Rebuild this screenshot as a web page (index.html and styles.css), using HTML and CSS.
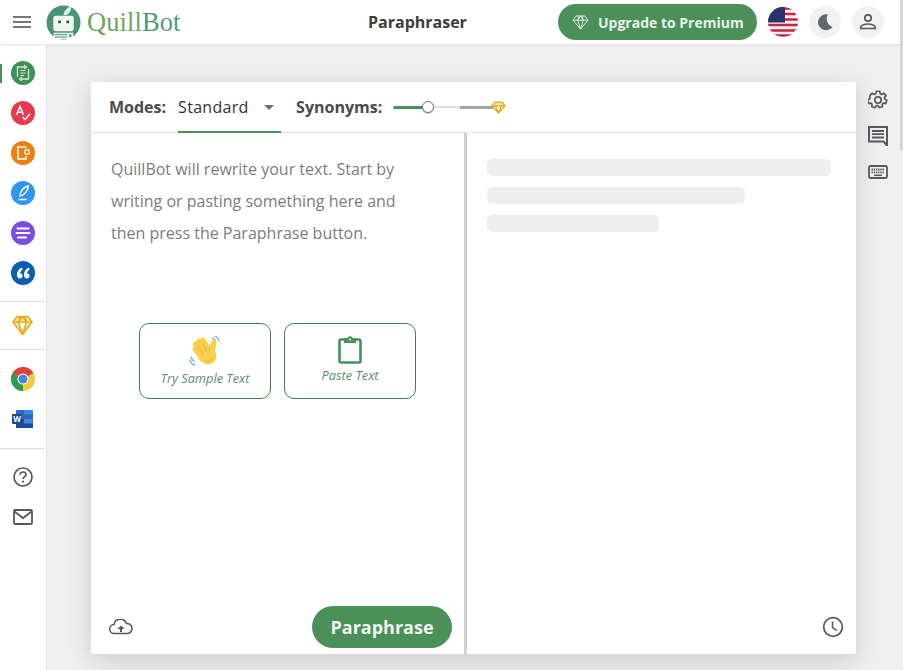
FILE: index.html
```html
<!DOCTYPE html>
<html lang="en">
<head>
<meta charset="utf-8">
<title>QuillBot Paraphraser</title>
<link rel="stylesheet" href="styles.css">
</head>
<body>
<div class="scroll-thumb"></div>
<header class="topbar">
  <div class="brand">
    <svg class="menu-icon" viewBox="0 0 18 12" width="18" height="12"><path d="M0 1h18M0 6h18M0 11h18" stroke="#4a4a4a" stroke-width="1.600"/></svg>
    <svg class="logo" viewBox="0 0 36 36" width="35" height="35">
      <circle cx="18" cy="18" r="17.500" fill="#4a9277"/>
      <path d="M18 10C19 5 22 2.500 25.500 1.500C26.500 5 24 9.500 20 10.500Z" fill="#dfeee7"/>
      <rect x="7.500" y="11" width="21" height="16" rx="2.500" fill="#f2f6f3"/>
      <rect x="12.500" y="16" width="2.800" height="2.800" fill="#2f5a49"/>
      <rect x="21" y="16" width="2.800" height="2.800" fill="#2f5a49"/>
      <path d="M8 28.500h20V35H8z" fill="#f2f6f3"/>
      <path d="M9 30.500h13M9 33h13" stroke="#4a9277"/>
      <circle cx="25" cy="31.500" r="1.400" fill="#4a9277"/>
    </svg>
    <span class="wordmark">Quill<span class="wordmark-dark">Bot</span></span>
  </div>
  <h1 class="page-title">Paraphraser</h1>
  <div class="top-actions">
    <button class="upgrade">
      <svg viewBox="0 0 18 16" width="17" height="15"><path d="M4.500 1h9L17 5.500 9 15 1 5.500zM1 5.500h16M6 5.500 9 15l3-9.500M6 5.500 7.500 1M12 5.500 10.500 1M6 5.500 9 1l3 4.500" fill="none" stroke="#e4f0e6" stroke-width="1"/></svg>
      Upgrade to Premium
    </button>
    <svg class="flag" viewBox="0 0 30 30" width="30" height="30">
      <defs><clipPath id="flag-clip"><circle cx="15" cy="15" r="15"/></clipPath></defs>
      <g clip-path="url(#flag-clip)">
        <rect width="30" height="30" fill="#f4f4f6"/>
        <path d="M0 1.500h30M0 7h30M0 12.500h30M0 18h30M0 23.500h30M0 28.500h30" stroke="#c4243f" stroke-width="2.600"/>
        <rect width="17" height="15.500" fill="#27346f"/>
      </g>
    </svg>
    <span class="round-btn"><svg viewBox="0 0 20 20" width="20" height="20"><path d="M13 2.500A8 8 0 1 0 17.500 15 8.500 8.500 0 0 1 13 2.500Z" fill="#63666a"/></svg></span>
    <span class="round-btn"><svg viewBox="0 0 20 20" width="20" height="20"><circle cx="10" cy="6" r="3.200" fill="none" stroke="#55585c" stroke-width="1.700"/><path d="M2.800 16.500v-1.200c0-2.300 4.500-3.300 7.200-3.300s7.200 1 7.200 3.300v1.200z" fill="none" stroke="#55585c" stroke-width="1.700"/></svg></span>
  </div>
</header>
<div class="body-row">
  <nav class="sidebar">
    <div class="nav-group first">
      <span class="active-mark"></span>
      <svg class="nav-icon" viewBox="0 0 24 24"><circle cx="12" cy="12" r="12" fill="#3f8f57"/><path d="M14.500 6H6.500v10M9.500 18h8V8" fill="none" stroke="#d5e9da" stroke-width="1.300"/><path d="M13 4 15.500 6 13 8M11 16 8.500 18 11 20" fill="none" stroke="#d5e9da" stroke-width="1.100"/><path d="M9.500 9.500h5M9.500 12h5M9.500 14.500h3.500" stroke="#d5e9da" stroke-width="1.200"/></svg>
      <svg class="nav-icon" viewBox="0 0 24 24"><circle cx="12" cy="12" r="12" fill="#e73a4f"/><path d="M5.500 14 9 5.500 12.500 14M6.800 11.300h4.400M11.500 16l2.500 2.500 5-5.500" fill="none" stroke="#fff" stroke-width="1.500"/></svg>
      <svg class="nav-icon" viewBox="0 0 24 24"><circle cx="12" cy="12" r="12" fill="#ee8012"/><path d="M15.500 6H7v12h8v-3" fill="none" stroke="#fff" stroke-width="1.500"/><circle cx="16" cy="11" r="2.300" fill="none" stroke="#fff" stroke-width="1.300"/></svg>
      <svg class="nav-icon" viewBox="0 0 24 24"><circle cx="12" cy="12" r="12" fill="#2e96f0"/><path d="M17.500 5C13 6 9.500 9.500 9 15c4-.5 7.500-4.500 8.500-10ZM7.500 18.500h8" fill="none" stroke="#fff" stroke-width="1.400"/></svg>
      <svg class="nav-icon" viewBox="0 0 24 24"><circle cx="12" cy="12" r="12" fill="#7a4fe0"/><path d="M6.500 7.500h11M5.500 12h13M7 16.500h8" stroke="#fff" stroke-width="2" stroke-linecap="round"/></svg>
      <svg class="nav-icon" viewBox="0 0 24 24"><circle cx="12" cy="12" r="12" fill="#0a5fae"/><path d="M11 6.500C7.500 8 6 10.500 6 14c0 2 1 3.500 2.700 3.500s2.800-1.200 2.800-2.700-1-2.500-2.500-2.500c.2-1.500 1-2.600 2.600-3.600zM18 6.500c-3.500 1.500-5 4-5 7.500 0 2 1 3.500 2.700 3.500s2.800-1.200 2.800-2.700-1-2.500-2.500-2.500c.2-1.500 1-2.600 2.600-3.600z" fill="#fff"/></svg>
    </div>
    <div class="nav-group single">
      <svg class="gem" viewBox="0 0 21 21" width="21" height="21"><path d="M5 1.500h11l4 5.500-9.500 12.500L1 7zM1 7h19M6.500 7l4 12.500 4-12.500M6.500 7 8 1.500M14.500 7 13 1.500M6.500 7l4-5.500 4 5.500" fill="#fbe9a8" stroke="#e3ac22" stroke-width="1.600" stroke-linejoin="round"/></svg>
    </div>
    <div class="nav-group apps">
      <svg class="nav-icon" viewBox="0 0 24 24"><circle cx="12" cy="12" r="12" fill="#f6c93f"/><path d="M12 12 1.600 6A12 12 0 0 1 22.400 6Z" fill="#de4437"/><path d="M12 12 1.600 6A12 12 0 0 0 12 24Z" fill="#2f9b4d"/><circle cx="12" cy="12" r="5.600" fill="#fff"/><circle cx="12" cy="12" r="4.500" fill="#4a83ea"/></svg>
      <svg class="word" viewBox="0 0 21 18" width="21" height="18"><rect x="4" y="0" width="17" height="18" rx="1" fill="#2b66c3"/><rect x="4" y="9" width="17" height="9" rx="1" fill="#1c4a9e"/><path d="M12 0h9v4.500h-9zM12 9h9v4.500h-9z" fill="#3d8ad8"/><rect x="0" y="4" width="10" height="10" rx="1" fill="#174a8f"/><text x="5" y="11.500" class="word-letter">W</text></svg>
    </div>
    <div class="nav-group help">
      <svg viewBox="0 0 20 20" width="20" height="20"><circle cx="10" cy="10" r="9" fill="none" stroke="#55585c" stroke-width="1.700"/><path d="M7 7.700C7 6 8.400 5 10 5s3 1 3 2.600c0 2.200-3 2.200-3 4.400" fill="none" stroke="#55585c" stroke-width="1.700"/><circle cx="10" cy="14.700" r="1.100" fill="#55585c"/></svg>
      <svg viewBox="0 0 20 16" width="20" height="16"><rect x="1" y="1" width="18" height="14" rx="1.200" fill="none" stroke="#55585c" stroke-width="1.800"/><path d="m1.500 2.500 8.500 6.500 8.500-6.500" fill="none" stroke="#55585c" stroke-width="1.800"/></svg>
    </div>
  </nav>
  <main class="main">
    <section class="card">
      <div class="toolbar">
        <span class="label">Modes:</span>
        <div class="mode-tab"><span>Standard</span><i class="caret"></i></div>
        <span class="label syn-label">Synonyms:</span>
        <div class="slider">
          <span class="track-green"></span>
          <span class="thumb"></span>
          <span class="track-light"></span>
          <span class="track-grey"></span>
          <svg viewBox="0 0 24 24" width="15" height="15"><path d="M6 3.500h12l4.500 6L12 21 1.500 9.500zM1.500 9.500h21M7.500 9.500 12 21l4.500-11.500" fill="#fbe9a8" stroke="#dfa71d" stroke-width="2" stroke-linejoin="round"/></svg>
        </div>
      </div>
      <div class="panes">
        <div class="pane-left">
          <p class="placeholder">QuillBot will rewrite your text. Start by writing or pasting something here and then press the Paraphrase button.</p>
          <div class="choices">
            <button class="choice">
              <svg viewBox="0 0 32 32" width="32" height="32">
                <path d="M23 1.500c2 .8 3.200 2.200 3.800 4M26 0c2.200 1 3.600 2.800 4.200 5.200M2 21c.4 2 1.600 3.600 3.600 4.600M.8 24c.8 2.800 2.600 4.500 5.200 5.500" fill="none" stroke="#6cb2e0" stroke-width="1.300"/>
                <g fill="none" stroke="#f9cf4f" stroke-width="5" stroke-linecap="round">
                  <path d="M10 5 17 16M14 4 21 15M6.500 8 14 19M6 13 13 23M25 6 23.500 16"/>
                </g>
                <circle cx="19" cy="20" r="8.500" fill="#f9cf4f"/>
                <path d="M12.500 6 18 15M8.500 10 15 19M17.500 25c2.500 1 4.500-.2 5.500-2.500M21.500 7.500 20 15" fill="none" stroke="#eca83a" stroke-width=".8"/>
              </svg>
              <span class="choice-text">Try Sample Text</span>
            </button>
            <button class="choice">
              <svg viewBox="0 0 24 28" width="24" height="28">
                <rect x="1.500" y="3.500" width="21" height="23" rx="1.500" fill="none" stroke="#4a8f5f" stroke-width="2.600"/>
                <path d="M6 2h3.500c.5-2.500 4.500-2.500 5 0H18v5H6z" fill="#4a8f5f"/>
                <circle cx="12" cy="3.500" r="1" fill="#fff"/>
              </svg>
              <span class="choice-text paste">Paste Text</span>
            </button>
          </div>
          <div class="pane-foot">
            <svg viewBox="0 0 24 16" width="24" height="16"><path d="M6 14.500H5.500a4.500 4.500 0 0 1-.5-9A6.500 6.500 0 0 1 17.500 4.500 5 5 0 0 1 18.500 14.500Z" fill="none" stroke="#55585c" stroke-width="1.500"/><path d="M12 6.500 8.500 10H11v3h2v-3h2.500Z" fill="#55585c"/></svg>
            <button class="paraphrase">Paraphrase</button>
          </div>
        </div>
        <div class="pane-right">
          <div class="skeleton">
            <span class="bone bone-long"></span>
            <span class="bone bone-mid"></span>
            <span class="bone bone-short"></span>
          </div>
          <div class="right-foot">
            <svg viewBox="0 0 22 22" width="22" height="22"><circle cx="11" cy="11" r="9.300" fill="none" stroke="#55585c" stroke-width="1.700"/><path d="M10.500 5.500V11.500L15 14.500" fill="none" stroke="#55585c" stroke-width="1.500"/></svg>
          </div>
        </div>
      </div>
    </section>
    <aside class="side-tools">
      <svg viewBox="0 0 24 24" width="20" height="20"><path d="M10 1.500h4l.6 2.900 1.900.9 2.500-1.500 2.700 3-1.900 2.100.4 2 2.300 1.400-1.200 3.900-2.900-.4-1.300 1.400.3 2.900-3.900 1.100-1.500-2.400h-2l-1.500 2.400-3.900-1.100.3-2.900-1.300-1.400-2.900.4-1.200-3.900 2.300-1.400.4-2L2.300 6.800 5 3.800l2.500 1.500 1.900-.9z" fill="none" stroke="#55585c" stroke-width="2" stroke-linejoin="round"/><circle cx="12" cy="12" r="3.800" fill="none" stroke="#55585c" stroke-width="2"/></svg>
      <svg viewBox="0 0 20 20" width="20" height="20"><path d="M1 1h18v14.500v4L15.500 15.500H1z" fill="none" stroke="#55585c" stroke-width="2"/><path d="M4 5h12M4 8.200h12M4 11.500h12" stroke="#55585c" stroke-width="1.800"/></svg>
      <svg class="keyboard" viewBox="0 0 20 14" width="20" height="14"><rect x="1" y="1" width="18" height="12" rx="1.500" fill="none" stroke="#55585c" stroke-width="1.800"/><path d="M3.500 4.500h13M3.500 7.300h13" stroke="#55585c" stroke-width="1.800" stroke-dasharray="1.400 .8"/><path d="M6 10.300h8" stroke="#55585c" stroke-width="1.500"/></svg>
    </aside>
  </main>
</div>
</body>
</html>
```
FILE: styles.css
```css
* { box-sizing: border-box; }
html, body { margin: 0; padding: 0; }
body {
  width: 903px;
  height: 670px;
  overflow: hidden;
  font-family: "Open Sans", "Noto Sans", sans-serif;
  color: #4a4a4a;
  background: #f0f0f0;
  display: flex;
  flex-direction: column;
  position: relative;
}
button { font-family: inherit; border: 0; cursor: pointer; padding: 0; }

.scroll-thumb {
  position: absolute;
  top: 0;
  right: 0;
  width: 3px;
  height: 150px;
  background: #d6d6d6;
  z-index: 5;
}

.topbar {
  height: 45px;
  flex: none;
  background: #fff;
  border-bottom: 1px solid #e6e6e6;
  display: flex;
  align-items: center;
  padding: 0 19px 0 13px;
  box-shadow: 0 1px 3px rgba(0,0,0,.04);
  position: relative;
  z-index: 2;
}
.brand { display: flex; align-items: center; width: 355px; flex: none; }
.menu-icon { flex: none; }
.logo { margin-left: 15px; flex: none; }
.wordmark {
  font-family: "Liberation Serif", serif;
  font-size: 26.500px;
  line-height: 1;
  margin-left: 6px;
  color: #6da65b;
  letter-spacing: .1px;
}
.wordmark-dark { color: #4c9a78; }
.page-title {
  margin: 0;
  font-size: 16px;
  font-weight: 700;
  color: #3d3d3d;
  line-height: 22px;
}
.top-actions { display: flex; align-items: center; margin-left: auto; }
.upgrade {
  display: flex;
  align-items: center;
  gap: 9px;
  height: 36px;
  width: 199px;
  padding-left: 14px;
  border-radius: 18px;
  background: #4a9058;
  color: #e8f2ea;
  font-size: 14px;
  font-weight: 700;
}
.flag { margin-left: 11px; flex: none; }
.round-btn {
  width: 32px;
  height: 32px;
  margin-left: 11px;
  border-radius: 50%;
  background: #f2f2f2;
  display: flex;
  align-items: center;
  justify-content: center;
}

.body-row { flex: 1; display: flex; min-height: 0; }
.sidebar {
  width: 47px;
  flex: none;
  padding-right: 1px;
  background: #fff;
  border-right: 1px solid #e4e4e4;
  display: flex;
  flex-direction: column;
}
.nav-group {
  display: flex;
  flex-direction: column;
  align-items: center;
  border-bottom: 1px solid #dedede;
  position: relative;
}
.nav-group svg { display: block; flex: none; }
.nav-icon { width: 24px; height: 24px; }
.nav-group.first { padding: 16px 0 16px; gap: 16px; }
.active-mark {
  position: absolute;
  left: 0;
  top: 19px;
  width: 2px;
  height: 19px;
  background: #4a9058;
}
.nav-group.single { padding: 13px 0 13px; }
.nav-group.apps { padding: 17px 0 20px; gap: 19px; }
.word-letter { font-size: 8px; font-weight: 700; fill: #fff; text-anchor: middle; }
.nav-group.help { border-bottom: 0; padding: 18px 0; gap: 22px; }

.main {
  flex: 1;
  display: flex;
  align-items: flex-start;
  padding: 37px 0 0 44px;
}
.card {
  width: 765px;
  height: 572px;
  background: #fff;
  box-shadow: 0 6px 24px rgba(0,0,0,.16);
  display: flex;
  flex-direction: column;
}
.toolbar {
  height: 51px;
  flex: none;
  display: flex;
  align-items: center;
  padding-left: 18px;
  border-bottom: 1px solid #e2e2e2;
}
.label { font-size: 16px; font-weight: 700; color: #4a4a4a; line-height: 22px; }
.mode-tab {
  margin-left: 12px;
  width: 103px;
  height: 51px;
  padding-top: 14px;
  display: flex;
  align-items: flex-start;
  justify-content: space-between;
  border-bottom: 2px solid #4a9058;
  font-size: 16px;
  line-height: 22px;
  color: #333;
  letter-spacing: .3px;
}
.caret {
  margin: 9px 7px 0 0;
  border: 5px solid transparent;
  border-top-color: #707070;
  border-bottom: 0;
}
.syn-label { margin-left: 15px; }
.slider { margin-left: 11px; display: flex; align-items: center; }
.track-green { width: 30px; height: 3px; background: #4a9058; border-radius: 2px; }
.thumb {
  width: 12px;
  height: 12px;
  margin-left: -1px;
  border-radius: 50%;
  background: #fff;
  border: 1px solid #6f6f6f;
  box-shadow: 0 1px 2px rgba(0,0,0,.2);
}
.track-light { width: 26px; height: 2px; background: #dcdcdc; }
.track-grey { width: 33px; height: 3px; background: #a6a6a6; margin-right: -2px; }

.panes { flex: 1; display: flex; min-height: 0; }
.pane-left {
  width: 376px;
  flex: none;
  border-right: 3px solid #cfcfcf;
  padding: 20px 12px 0 20px;
  display: flex;
  flex-direction: column;
}
.placeholder {
  margin: 0;
  max-width: 300px;
  font-size: 16px;
  line-height: 32px;
  color: #7c7c7c;
}
.choices {
  display: flex;
  gap: 13px;
  margin: 74px 0 0 28px;
}
.choice {
  width: 132px;
  height: 76px;
  background: #fff;
  border: 1px solid #3f7f55;
  border-radius: 10px;
  display: flex;
  flex-direction: column;
  align-items: center;
  justify-content: flex-start;
  padding-top: 12px;
}
.choice svg { display: block; flex: none; }
.choice-text {
  font-size: 12.800px;
  font-style: italic;
  color: #5f8a70;
  line-height: 16px;
  margin-top: 2px;
}
.choice-text.paste { margin-top: 3px; }
.pane-foot {
  margin-top: auto;
  display: flex;
  align-items: center;
  justify-content: space-between;
  padding: 0 0 6px;
  margin-left: -2px;
}
.paraphrase {
  width: 140px;
  height: 42px;
  border-radius: 21px;
  background: #4a9058;
  color: #eef5ef;
  font-size: 18px;
  font-weight: 700;
}
.pane-right {
  flex: 1;
  padding: 26px 12px 16px 20px;
  display: flex;
  flex-direction: column;
  justify-content: space-between;
}
.skeleton { display: flex; flex-direction: column; gap: 11px; }
.bone { display: block; height: 17px; border-radius: 5px; background: #efefef; }
.bone-long { width: 344px; }
.bone-mid { width: 258px; }
.bone-short { width: 172px; }
.right-foot { display: flex; justify-content: flex-end; }
.right-foot svg { display: block; }

.side-tools {
  margin-left: 12px;
  padding-top: 8px;
  display: flex;
  flex-direction: column;
  align-items: center;
  gap: 16px;
  width: 20px;
}
.side-tools svg { display: block; flex: none; }
.side-tools .keyboard { margin-top: 3px; }
```
